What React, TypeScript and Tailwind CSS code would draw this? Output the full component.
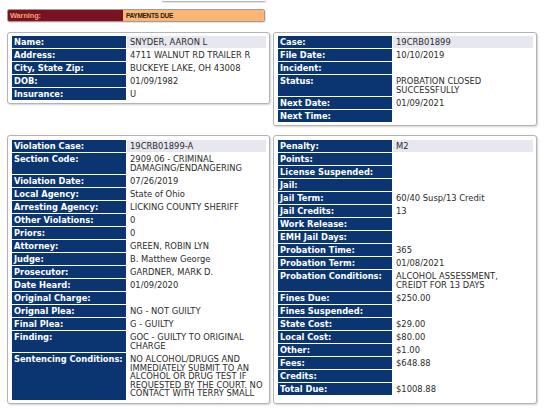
import React from "react";

type Item = [string, string | string[]];

const P1: Item[] = [
  ["Name:", "SNYDER, AARON L"],
  ["Address:", "4711 WALNUT RD TRAILER R"],
  ["City, State Zip:", "BUCKEYE LAKE, OH 43008"],
  ["DOB:", "01/09/1982"],
  ["Insurance:", "U"],
];

const P2: Item[] = [
  ["Case:", "19CRB01899"],
  ["File Date:", "10/10/2019"],
  ["Incident:", ""],
  ["Status:", ["PROBATION CLOSED", "SUCCESSFULLY"]],
  ["Next Date:", "01/09/2021"],
  ["Next Time:", ""],
];

const P3: Item[] = [
  ["Violation Case:", "19CRB01899-A"],
  ["Section Code:", ["2909.06 - CRIMINAL", "DAMAGING/ENDANGERING"]],
  ["Violation Date:", "07/26/2019"],
  ["Local Agency:", "State of Ohio"],
  ["Arresting Agency:", "LICKING COUNTY SHERIFF"],
  ["Other Violations:", "0"],
  ["Priors:", "0"],
  ["Attorney:", "GREEN, ROBIN LYN"],
  ["Judge:", "B. Matthew George"],
  ["Prosecutor:", "GARDNER, MARK D."],
  ["Date Heard:", "01/09/2020"],
  ["Original Charge:", ""],
  ["Orignal Plea:", "NG - NOT GUILTY"],
  ["Final Plea:", "G - GUILTY"],
  ["Finding:", ["GOC - GUILTY TO ORIGINAL", "CHARGE"]],
  [
    "Sentencing Conditions:",
    [
      "NO ALCOHOL/DRUGS AND",
      "IMMEDIATELY SUBMIT TO AN",
      "ALCOHOL OR DRUG TEST IF",
      "REQUESTED BY THE COURT. NO",
      "CONTACT WITH TERRY SMALL",
    ],
  ],
];

const P4: Item[] = [
  ["Penalty:", "M2"],
  ["Points:", ""],
  ["License Suspended:", ""],
  ["Jail:", ""],
  ["Jail Term:", "60/40 Susp/13 Credit"],
  ["Jail Credits:", "13"],
  ["Work Release:", ""],
  ["EMH Jail Days:", ""],
  ["Probation Time:", "365"],
  ["Probation Term:", "01/08/2021"],
  ["Probation Conditions:", ["ALCOHOL ASSESSMENT,", "CREIDT FOR 13 DAYS"]],
  ["Fines Due:", "$250.00"],
  ["Fines Suspended:", ""],
  ["State Cost:", "$29.00"],
  ["Local Cost:", "$80.00"],
  ["Other:", "$1.00"],
  ["Fees:", "$648.88"],
  ["Credits:", ""],
  ["Total Due:", "$1008.88"],
];

function Row({ item, first }: { item: Item; first: boolean }) {
  const [label, value] = item;
  const lines = Array.isArray(value) ? value : [value];
  const multi = lines.length > 1;
  return (
    <>
      <div
        className={
          multi
            ? "bg-[#0a3570] text-white font-bold text-[8.3px] pl-[2px] leading-[8.5px] py-[2px] whitespace-nowrap"
            : "bg-[#0a3570] text-white font-bold text-[8.3px] pl-[2px] h-[12px] leading-[12px] whitespace-nowrap"
        }
      >
        {label}
      </div>
      <div
        className={
          (first ? "bg-[#e6e7ef] " : "bg-white ") +
          (multi
            ? "text-[#2b2b2b] text-[8.4px] pl-[3px] leading-[8.5px] py-[2px] whitespace-nowrap"
            : "text-[#2b2b2b] text-[8.4px] pl-[3px] h-[12px] leading-[12px] whitespace-nowrap")
        }
      >
        {lines.map((l, i) => (
          <div key={i}>{l}</div>
        ))}
      </div>
    </>
  );
}

function Panel({ items, className }: { items: Item[]; className: string }) {
  return (
    <div
      className={
        "bg-white border border-[#b3b3b3] rounded-[3px] shadow-[1px_1px_2px_rgba(0,0,0,0.18)] pl-[4px] pr-[3px] pt-[3px] pb-[3px] " +
        className
      }
    >
      <div className="grid grid-cols-[114px_1fr] gap-[1px] content-start">
        {items.map((it, i) => (
          <Row key={i} item={it} first={i === 0} />
        ))}
      </div>
    </div>
  );
}

export default function App() {
  return (
    <div className="w-[546px] h-[409px] bg-white overflow-hidden font-['DejaVu_Sans',Verdana,sans-serif]">
      <div className="ml-[162px] w-[104px] h-[2px] border-b border-[#b8b8b8] rounded-b-[2px] shadow-[0_1px_1px_rgba(0,0,0,0.12)]" />
      <div className="mt-[7px] ml-[7px] w-[258px] h-[13px] flex border border-[#9c9c9c] rounded-[2px] overflow-hidden shadow-[1px_1px_1px_rgba(0,0,0,0.12)]">
        <div className="w-[115px] bg-[#7a1222] text-[#f2a06a] font-['Liberation_Sans',Arial,sans-serif] font-bold text-[7.4px] leading-[11px] pl-[2px] tracking-[-0.1px]">
          Warning:
        </div>
        <div className="flex-1 bg-[#fbb673] text-[#2a1a0a] font-['Liberation_Sans',Arial,sans-serif] font-bold text-[6.5px] leading-[11px] pl-[3px] tracking-[-0.3px]">
          PAYMENTS DUE
        </div>
      </div>
      <div className="mt-[10px] pl-[7px] flex gap-[3px] items-start">
        <Panel items={P1} className="w-[263px]" />
        <Panel items={P2} className="w-[264px]" />
      </div>
      <div className="mt-[9px] pl-[7px] flex gap-[3px] items-stretch">
        <Panel items={P3} className="w-[263px] pt-[4px]" />
        <Panel items={P4} className="w-[264px] pt-[4px]" />
      </div>
    </div>
  );
}
